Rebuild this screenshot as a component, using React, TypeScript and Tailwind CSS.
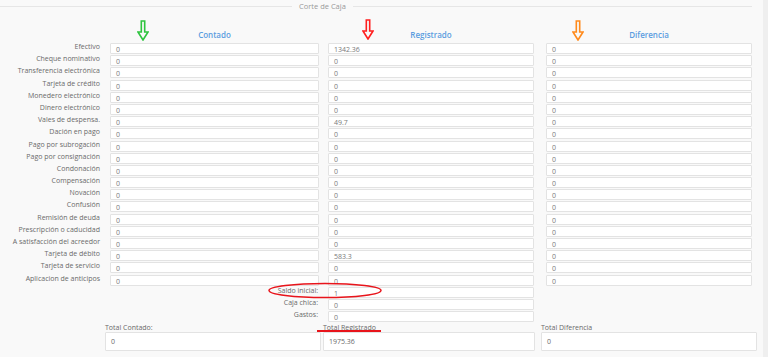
import React from "react";

const rows: { label: string; c: string; r: string; d: string }[] = [
  { label: "Efectivo", c: "0", r: "1342.36", d: "0" },
  { label: "Cheque nominativo", c: "0", r: "0", d: "0" },
  { label: "Transferencia electrónica", c: "0", r: "0", d: "0" },
  { label: "Tarjeta de crédito", c: "0", r: "0", d: "0" },
  { label: "Monedero electrónico", c: "0", r: "0", d: "0" },
  { label: "Dinero electrónico", c: "0", r: "0", d: "0" },
  { label: "Vales de despensa.", c: "0", r: "49.7", d: "0" },
  { label: "Dación en pago", c: "0", r: "0", d: "0" },
  { label: "Pago por subrogación", c: "0", r: "0", d: "0" },
  { label: "Pago por consignación", c: "0", r: "0", d: "0" },
  { label: "Condonación", c: "0", r: "0", d: "0" },
  { label: "Compensación", c: "0", r: "0", d: "0" },
  { label: "Novación", c: "0", r: "0", d: "0" },
  { label: "Confusión", c: "0", r: "0", d: "0" },
  { label: "Remisión de deuda", c: "0", r: "0", d: "0" },
  { label: "Prescripción o caducidad", c: "0", r: "0", d: "0" },
  { label: "A satisfacción del acreedor", c: "0", r: "0", d: "0" },
  { label: "Tarjeta de débito", c: "0", r: "583.3", d: "0" },
  { label: "Tarjeta de servicio", c: "0", r: "0", d: "0" },
  { label: "Aplicacion de anticipos", c: "0", r: "0", d: "0" },
];

const extra = [
  { label: "Saldo inicial:", r: "1" },
  { label: "Caja chica:", r: "0" },
  { label: "Gastos:", r: "0" },
];

function Box({ v }: { v: string }) {
  return (
    <div className="h-[11px] border border-[#e3e3e3] bg-white rounded-[1px] pl-[5px] pt-[2px] text-[7px] leading-[8px] text-[#7a7a7a]">
      {v}
    </div>
  );
}

function Arrow({ color, className }: { color: string; className: string }) {
  return (
    <svg className={className} width="12" height="21" viewBox="0 0 12 21">
      <path
        d="M4.3 1 H7.7 V12 H11 L6 20 L1 12 H4.3 Z"
        fill="none"
        stroke={color}
        strokeWidth="1.6"
        strokeLinejoin="miter"
      />
    </svg>
  );
}

export default function App() {
  return (
    <div
      className="relative w-[768px] h-[357px] overflow-hidden bg-[#f9f9f9] flex"
      style={{ fontFamily: '"Open Sans", "Liberation Sans", sans-serif' }}
    >
      <div className="w-[763px]">
        {/* legend */}
        <div className="flex items-center w-[752px] h-[12px]">
          <div className="w-[292px] h-px bg-[#e6e6e6]" />
          <span className="px-[7px] text-[7.5px] leading-[10px] text-[#9a9a9a]">Corte de Caja</span>
          <div className="flex-1 h-px bg-[#e6e6e6]" />
        </div>

        {/* headers */}
        <div className="flex h-[31px]">
          <div className="w-[110px]" />
          <div className="w-[209px] flex items-end justify-center pb-[4px] text-[8px] leading-[9px] font-semibold text-[#5b9de0]">
            Contado
          </div>
          <div className="ml-[9px] w-[206px] flex items-end justify-center pb-[4px] text-[8px] leading-[9px] font-semibold text-[#5b9de0]">
            Registrado
          </div>
          <div className="ml-[12px] w-[206px] flex items-end justify-center pb-[4px] text-[8px] leading-[9px] font-semibold text-[#5b9de0]">
            Diferencia
          </div>
        </div>

        {/* rows */}
        {rows.map((row) => (
          <div key={row.label} className="flex h-[12.2px]">
            <div className="w-[100px] text-right text-[7px] leading-[8px] text-[#6a6a6a] whitespace-nowrap">
              {row.label}
            </div>
            <div className="ml-[10px] w-[209px]">
              <Box v={row.c} />
            </div>
            <div className="ml-[9px] w-[206px]">
              <Box v={row.r} />
            </div>
            <div className="ml-[12px] w-[206px]">
              <Box v={row.d} />
            </div>
          </div>
        ))}
        {extra.map((row) => (
          <div key={row.label} className="flex h-[12.2px]">
            <div className="w-[100px]" />
            <div className="ml-[10px] w-[209px] text-right pr-[1px] text-[7px] leading-[8px] text-[#6a6a6a] whitespace-nowrap">
              {row.label}
            </div>
            <div className="ml-[9px] w-[206px]">
              <Box v={row.r} />
            </div>
            <div className="ml-[12px] w-[206px]" />
          </div>
        ))}

        {/* totals */}
        <div className="flex ml-[105px]">
          <div className="w-[216px]">
            <div className="h-[9px] text-[7px] leading-[9px] text-[#6a6a6a]">Total Contado:</div>
            <div className="h-[19px] border border-[#e3e3e3] bg-white rounded-[1px] pl-[5px] flex items-center text-[7px] text-[#6a6a6a]">
              0
            </div>
          </div>
          <div className="ml-[2px] w-[212px]">
            <div className="h-[9px] text-[7px] leading-[9px] text-[#6a6a6a]">Total Registrado</div>
            <div className="h-[19px] border border-[#e3e3e3] bg-white rounded-[1px] pl-[5px] flex items-center text-[7px] text-[#6a6a6a]">
              1975.36
            </div>
          </div>
          <div className="ml-[6px] w-[216px]">
            <div className="h-[9px] text-[7px] leading-[9px] text-[#6a6a6a]">Total Diferencia</div>
            <div className="h-[19px] border border-[#e3e3e3] bg-white rounded-[1px] pl-[5px] flex items-center text-[7px] text-[#6a6a6a]">
              0
            </div>
          </div>
        </div>
      </div>
      <div className="flex-1 bg-[#efefef]" />

      {/* annotations */}
      <Arrow color="#2fc43f" className="absolute left-[137px] top-[20px]" />
      <Arrow color="#ff1f1f" className="absolute left-[362px] top-[19px]" />
      <Arrow color="#ff8a1c" className="absolute left-[572px] top-[20px]" />
      <svg className="absolute left-[267px] top-[282px]" width="116" height="17" viewBox="0 0 116 17">
        <ellipse cx="58" cy="8.5" rx="56" ry="7" fill="none" stroke="#e8141b" strokeWidth="1.5" />
      </svg>
      <div className="absolute left-[317px] top-[330px] w-[64px] h-[1.5px] bg-[#e8141b]" />
    </div>
  );
}
